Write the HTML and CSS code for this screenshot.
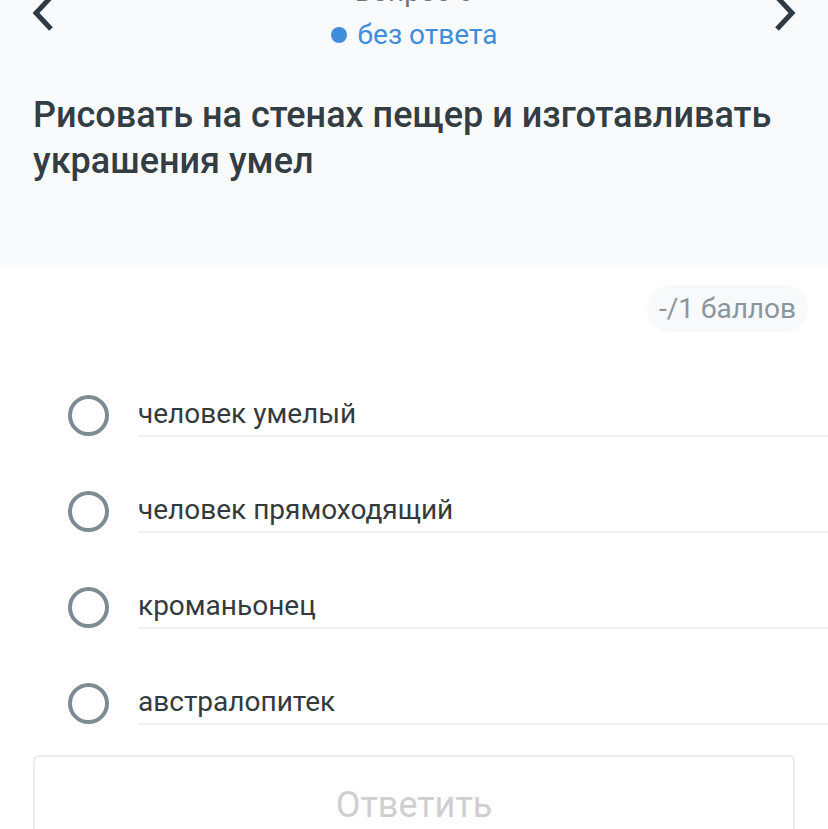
FILE: index.html
```html
<!DOCTYPE html>
<html lang="ru">
<head>
<meta charset="utf-8">
<link rel="stylesheet" href="styles.css">
</head>
<body>
<div class="header">
  <div class="nav">
    <svg class="chev" width="24" height="36" viewBox="0 0 24 36"><path d="M20 2 L5 18 L20 34" fill="none" stroke="#2f3a42" stroke-width="5"/></svg>
    <div class="nav-center">
      <div class="qnum">Вопрос 6</div>
      <div class="status"><span class="dot"></span>без ответа</div>
    </div>
    <svg class="chev" width="24" height="36" viewBox="0 0 24 36"><path d="M4 2 L19 18 L4 34" fill="none" stroke="#2f3a42" stroke-width="5"/></svg>
  </div>
  <h1 class="question">Рисовать на стенах пещер и изготавливать украшения умел</h1>
</div>
<div class="score-row"><span class="score">-/1 баллов</span></div>
<div class="options">
  <label class="option"><span class="radio"></span><span class="opt-text">человек умелый</span></label>
  <label class="option"><span class="radio"></span><span class="opt-text">человек прямоходящий</span></label>
  <label class="option"><span class="radio"></span><span class="opt-text">кроманьонец</span></label>
  <label class="option"><span class="radio"></span><span class="opt-text">австралопитек</span></label>
</div>
<div class="actions"><button class="answer">Ответить</button></div>
</body>
</html>
```
FILE: styles.css
```css
html, body { margin: 0; padding: 0; background: #fff; }
body { font-family: Roboto, "Noto Sans", sans-serif; width: 828px; overflow: hidden; }
.header { background: #f8fafc; height: 267px; box-sizing: border-box; display: flow-root; }
.nav { display: flex; justify-content: space-between; align-items: center; padding: 0 31px; margin-top: -30px; }
.chev { display: block; }
.nav-center { display: flex; flex-direction: column; align-items: center; }
.qnum { font-size: 28px; line-height: 43px; color: #6c757b; }
.status { font-size: 28px; line-height: 43px; color: #3f8ddb; display: flex; align-items: center; }
.dot { width: 16px; height: 16px; border-radius: 50%; background: #3f8ddb; margin-right: 11px; }
.question { margin: 0; padding: 36px 33px 0; font-size: 36px; line-height: 46px; font-weight: 500; color: #333d44; }
.score-row { display: flex; justify-content: flex-end; padding: 18px 20px 0 0; }
.score { background: #f7f9fa; border-radius: 24px; height: 47px; line-height: 47px; padding: 0 12px; font-size: 28px; color: #8b959c; }
.options { margin-top: 35px; }
.option { display: flex; align-items: center; height: 96px; }
.radio { width: 33px; height: 33px; border: 4px solid #7d8b93; border-radius: 50%; margin: 0 29px 0 68px; flex: none; }
.opt-text { flex: 1; align-self: flex-start; height: 70px; box-sizing: border-box; padding-top: 32px; line-height: 30px; font-size: 28px; color: #333a40; border-bottom: 2px solid #eeeff0; }
.actions { padding: 4px 33px 0; }
.answer { display: block; width: 762px; height: 100px; border: 2px solid #ececec; border-radius: 6px; background: #fff; font-family: Roboto, sans-serif; font-size: 36px; color: #cfcfcf; }
```
